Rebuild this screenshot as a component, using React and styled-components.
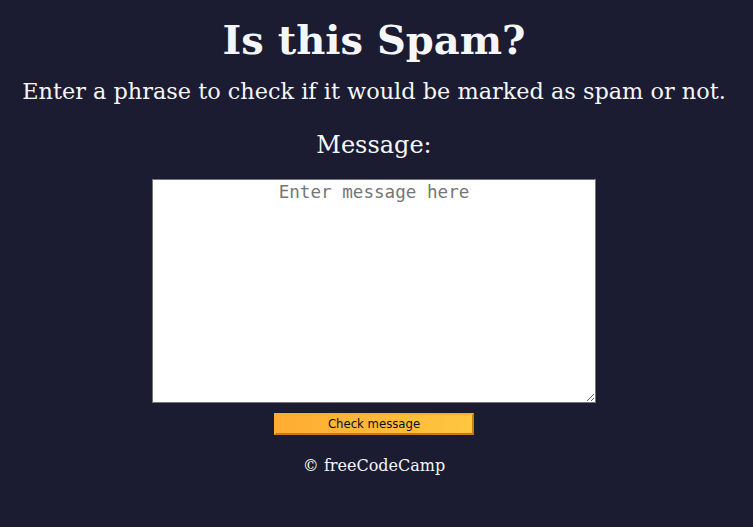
import React from 'react';
import styled, { createGlobalStyle } from 'styled-components';

const GlobalStyle = createGlobalStyle`
    body {
        margin: 0;
        background-color: #1b1b32;
        color: #f5f6f7;
        font-family: 'DejaVu Serif', serif;
    }
`

const Main = styled.main`
    display: flex;
    flex-direction: column;
    align-items: center;
    text-align: center;
    padding: 16px 5px 0 0;
`

const Title = styled.h1`
    margin: 0;
    font-size: 2.5rem;
    line-height: 48px;
`

const Description = styled.p`
    margin: 14px 0 0;
    font-size: 1.4rem;
`

const Label = styled.label`
    margin-top: 27px;
    font-size: 1.5rem;
`

const MessageInput = styled.textarea`
    box-sizing: border-box;
    margin-top: 20px;
    width: 444px;
    height: 224px;
    padding: 2px;
    border: 1px solid #767676;
    background: #fff;
    font-family: 'DejaVu Sans Mono', monospace;
    font-size: 1.1rem;
    text-align: center;
    &::placeholder {
        color: #757575;
    }
`

const CheckButton = styled.button`
    box-sizing: border-box;
    margin-top: 10px;
    width: 200px;
    height: 22px;
    padding: 0;
    font-family: 'DejaVu Sans', sans-serif;
    font-size: 11.7px;
    color: #0a0a23;
    background-color: #feac32;
    background-image: linear-gradient(90deg, #feac32, #ffc640);
    border: 2px solid;
    border-color: #feac32 #c47d12 #c47d12 #feac32;
    cursor: pointer;
`

const Footer = styled.footer`
    margin-top: 21px;
    font-size: 1rem;
`

const App = () => {
    return <>
        <GlobalStyle />
        <Main>
            <Title>Is this Spam?</Title>
            <Description>Enter a phrase to check if it would be marked as spam or not.</Description>
            <Label htmlFor="message-input">Message:</Label>
            <MessageInput id="message-input" placeholder="Enter message here" />
            <CheckButton>Check message</CheckButton>
            <Footer>© freeCodeCamp</Footer>
        </Main>
    </>
}

export default App;
